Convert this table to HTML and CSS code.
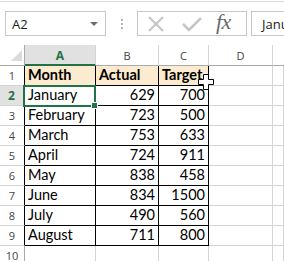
FILE: index.html
```html
<!DOCTYPE html>
<html>
<head>
<meta charset="utf-8">
<link rel="stylesheet" href="styles.css">
</head>
<body>
<div class="app">
  <div class="ribbon-edge"></div>
  <div class="fbar">
    <div class="namebox">
      <span class="namebox-text">A2</span>
      <span class="dd-arrow"></span>
    </div>
    <div class="grip"><span></span><span></span><span></span></div>
    <div class="fnbox">
      <svg class="ic ic-x" width="18" height="16" viewBox="0 0 18 16"><path d="M2 1 L16 15 M16 1 L2 15" stroke="#c6c6c6" stroke-width="2.2" fill="none"/></svg>
      <svg class="ic ic-check" width="20" height="16" viewBox="0 0 20 16"><path d="M1 8 L7 14 L19 2" stroke="#c6c6c6" stroke-width="2.6" fill="none"/></svg>
      <span class="fx">fx</span>
    </div>
    <div class="input"><span>January</span></div>
  </div>
  <div class="sheet">
    <div class="corner"><svg width="25" height="21" viewBox="0 0 25 21"><path d="M22 5 L22 16 L11 16 Z" fill="#dcdcdc"/></svg></div>
    <div class="ch sel-col">A</div>
    <div class="ch">B</div>
    <div class="ch">C</div>
    <div class="ch">D</div>
    <div class="ch last"></div>

    <div class="rh tb">1</div>
    <div class="c tb hd">Month</div>
    <div class="c tb hd">Actual</div>
    <div class="c tb hd">Target</div>
    <div class="c"></div><div class="c"></div>

    <div class="rh tb sel-row">2</div>
    <div class="c tb">January</div>
    <div class="c tb num">629</div>
    <div class="c tb num">700</div>
    <div class="c"></div><div class="c"></div>

    <div class="rh tb">3</div>
    <div class="c tb">February</div>
    <div class="c tb num">723</div>
    <div class="c tb num">500</div>
    <div class="c"></div><div class="c"></div>

    <div class="rh tb">4</div>
    <div class="c tb">March</div>
    <div class="c tb num">753</div>
    <div class="c tb num">633</div>
    <div class="c"></div><div class="c"></div>

    <div class="rh tb">5</div>
    <div class="c tb">April</div>
    <div class="c tb num">724</div>
    <div class="c tb num">911</div>
    <div class="c"></div><div class="c"></div>

    <div class="rh tb">6</div>
    <div class="c tb">May</div>
    <div class="c tb num">838</div>
    <div class="c tb num">458</div>
    <div class="c"></div><div class="c"></div>

    <div class="rh tb">7</div>
    <div class="c tb">June</div>
    <div class="c tb num">834</div>
    <div class="c tb num">1500</div>
    <div class="c"></div><div class="c"></div>

    <div class="rh tb">8</div>
    <div class="c tb">July</div>
    <div class="c tb num">490</div>
    <div class="c tb num">560</div>
    <div class="c"></div><div class="c"></div>

    <div class="rh tb">9</div>
    <div class="c tb">August</div>
    <div class="c tb num">711</div>
    <div class="c tb num">800</div>
    <div class="c"></div><div class="c"></div>

    <div class="rh">10</div>
    <div class="c"></div><div class="c"></div><div class="c"></div><div class="c"></div><div class="c"></div>

    <div class="selection"><span class="handle"></span></div>
    <svg class="cursor" width="16" height="16" viewBox="0 0 16 16"><path d="M5.5 0.5 H10.5 V5.5 H15.5 V10.5 H10.5 V15.5 H5.5 V10.5 H0.5 V5.5 H5.5 Z" fill="#fff" stroke="#000" stroke-width="1"/></svg>
  </div>
</div>
</body>
</html>
```
FILE: styles.css
```css
html, body {
  margin: 0;
  padding: 0;
  background: #fff;
}
.app {
  width: 284px;
  height: 261px;
  overflow: hidden;
  position: relative;
  font-family: "Open Sans", "Noto Sans", sans-serif;
}
.ribbon-edge {
  height: 1px;
  margin-top: 1px;
  background: #d8d8d8;
}
.fbar {
  display: flex;
  height: 25px;
  margin: 9px 0 9px 5px;
}
.namebox {
  box-sizing: border-box;
  width: 101px;
  height: 25px;
  border: 1px solid #c6c6c6;
  display: flex;
  align-items: center;
  justify-content: space-between;
  padding: 0 7px 0 6px;
}
.namebox-text, .input span {
  font-size: 13px;
  color: #222;
  font-family: "Open Sans", sans-serif;
}
.dd-arrow {
  width: 0;
  height: 0;
  border-left: 4px solid transparent;
  border-right: 4px solid transparent;
  border-top: 4px solid #6e6e6e;
  margin-top: 1px;
}
.grip {
  width: 31px;
  display: flex;
  flex-direction: column;
  align-items: center;
  justify-content: center;
  gap: 2px;
}
.grip span {
  width: 2px;
  height: 2px;
  background: #b4b4b4;
}
.fnbox {
  box-sizing: border-box;
  width: 110px;
  height: 25px;
  border: 1px solid #c6c6c6;
  display: flex;
  align-items: center;
  padding-left: 9px;
}
.ic-x { margin-right: 17px; }
.ic-check { margin-right: 14px; }
.fx {
  font-family: "Liberation Serif", "DejaVu Serif", serif;
  font-style: italic;
  font-size: 22px;
  color: #6a6a6a;
  line-height: 1;
  margin-top: -3px;
  letter-spacing: -0.5px;
}
.input {
  box-sizing: border-box;
  margin-left: 4px;
  flex: 1;
  height: 25px;
  border: 1px solid #c6c6c6;
  border-right: none;
  display: flex;
  align-items: center;
  padding-left: 10px;
  overflow: hidden;
  white-space: nowrap;
}
.sheet {
  position: relative;
  display: grid;
  grid-template-columns: 25px 71px 63px 50px 64px 11px;
  grid-template-rows: 21px repeat(10, 20px);
}
.corner, .ch, .rh, .c {
  box-sizing: border-box;
  border-right: 1px solid #d4d4d4;
  border-bottom: 1px solid #d4d4d4;
  overflow: hidden;
  white-space: nowrap;
}
.corner {
  border-right-color: #ababab;
  border-bottom-color: #ababab;
}
.ch {
  font-size: 11px;
  color: #444;
  display: flex;
  align-items: center;
  justify-content: center;
  border-bottom-color: #ababab;
  border-right-color: #d4d4d4;
  padding-top: 1px;
}
.ch.last { border-right: none; }
.sel-col {
  background: #e1e1e1;
  color: #217346;
  font-weight: bold;
  border-bottom: 2px solid #217346;
  font-size: 12px;
}
.rh {
  font-size: 11px;
  color: #444;
  display: flex;
  align-items: center;
  justify-content: center;
  border-right-color: #ababab;
}
.sel-row {
  background: #e1e1e1;
  color: #217346;
  font-weight: bold;
  font-size: 12px;
  border-right: 2px solid #217346;
}
.c {
  font-family: "Lato", "Liberation Sans", sans-serif;
  font-size: 14.5px;
  color: #000;
  display: flex;
  align-items: flex-end;
  padding: 0 3px 1px 3px;
  line-height: 18px;
}
.c.tb {
  border-right-color: #000;
  border-bottom-color: #000;
}
.rh.tb {
  border-right-color: #000;
}
.sel-row.tb { border-right-color: #217346; }
.hd {
  background: #fcebce;
  font-weight: bold;
}
.num { justify-content: flex-end; }
.selection {
  position: absolute;
  left: 23px;
  top: 40px;
  width: 73px;
  height: 22px;
  box-sizing: border-box;
  border: 2px solid #217346;
  pointer-events: none;
}
.handle {
  position: absolute;
  right: -4px;
  bottom: -4px;
  width: 5px;
  height: 5px;
  background: #217346;
  border: 1px solid #fff;
}
.cursor {
  position: absolute;
  left: 198px;
  top: 29px;
}
```
